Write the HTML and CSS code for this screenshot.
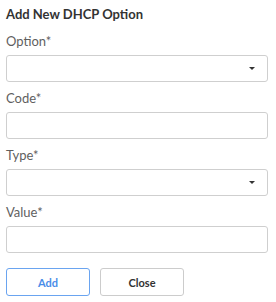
FILE: index.html
```html
<!DOCTYPE html>
<html>
<head>
<meta charset="utf-8">
<link rel="stylesheet" href="styles.css">
</head>
<body>
<div class="dialog">
  <div class="title">Add New DHCP Option</div>
  <div class="field">
    <div class="label">Option*</div>
    <div class="input select"><span class="caret"></span></div>
  </div>
  <div class="field">
    <div class="label">Code*</div>
    <div class="input"></div>
  </div>
  <div class="field">
    <div class="label">Type*</div>
    <div class="input select"><span class="caret"></span></div>
  </div>
  <div class="field">
    <div class="label">Value*</div>
    <div class="input"></div>
  </div>
  <div class="actions">
    <button class="btn primary">Add</button>
    <button class="btn">Close</button>
  </div>
</div>
</body>
</html>
```
FILE: styles.css
```css
html, body {
  margin: 0;
  padding: 0;
  background: #fff;
}
body {
  font-family: "Lato", "Open Sans", sans-serif;
}
.dialog {
  width: 262px;
  padding: 6px 0 0 6px;
}
.title {
  font-size: 13px;
  font-weight: 700;
  line-height: 16px;
  color: #333;
  margin-bottom: 11px;
}
.field {
  display: flex;
  flex-direction: column;
  gap: 6px;
  margin-bottom: 8px;
}
.label {
  font-size: 13px;
  line-height: 16px;
  color: #5f5f5f;
}
.input {
  box-sizing: border-box;
  height: 27px;
  border: 1px solid #cfcfcf;
  border-radius: 3px;
  display: flex;
  align-items: center;
  justify-content: flex-end;
  padding-right: 12px;
}
.caret {
  width: 0;
  height: 0;
  border-left: 3px solid transparent;
  border-right: 3px solid transparent;
  border-top: 3px solid #333;
}
.actions {
  display: flex;
  gap: 10px;
  margin-top: 15px;
}
.btn {
  box-sizing: border-box;
  width: 84px;
  height: 28px;
  border: 1px solid #cccccc;
  border-radius: 3px;
  background: #fff;
  font-family: "Lato", "Open Sans", sans-serif;
  font-size: 11px;
  font-weight: 700;
  color: #333;
  padding: 0;
}
.btn.primary {
  border-color: #6aa4f0;
  color: #4a8de8;
}
```
